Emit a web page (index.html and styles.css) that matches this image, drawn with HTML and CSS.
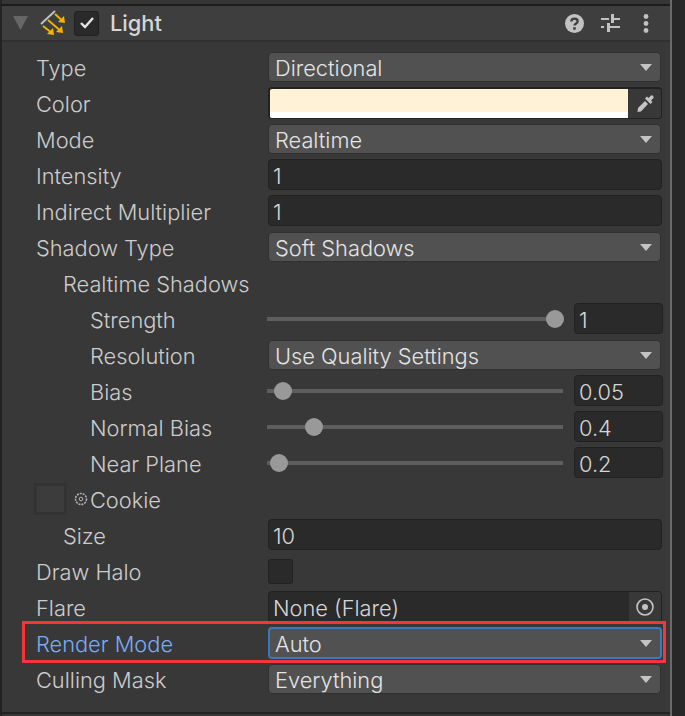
FILE: index.html
```html
<!DOCTYPE html>
<html lang="en">
<head>
  <meta charset="UTF-8">
  <meta name="viewport" content="width=device-width, initial-scale=1.0">
  <title>Light</title>
  <link rel="stylesheet" href="styles.css">
</head>
<body>
  <div class="window">
    <div class="panel">
      <div class="header">
        <svg class="foldout" width="15" height="14" viewBox="0 0 15 14"><path d="M0 0H15L7.500 14Z" fill="#666"/></svg>
        <svg class="light-icon" width="26" height="26" viewBox="0 0 26 26">
          <path d="M1 14 15 1" stroke="#c4c4c4" stroke-width="1.800" fill="none"/>
          <g stroke="#f5b400" stroke-width="1.800" fill="none">
            <path d="M15 4 21 9.500"/>
            <path d="M8 10 19 19.500"/>
            <path d="M3 16 10 21.500"/>
          </g>
          <g fill="#f5b400">
            <path d="M25 13 24 6 18 12Z"/>
            <path d="M23 23 22 16 16 22Z"/>
            <path d="M14 25 13 18 7 24Z"/>
          </g>
        </svg>
        <span class="checkbox header-check">
          <svg width="16" height="14" viewBox="0 0 16 14"><path d="M2 7 6 11 14 2" stroke="#e6e6e6" stroke-width="2.400" fill="none"/></svg>
        </span>
        <span class="title">Light</span>
        <span class="header-icons">
          <svg class="help-icon" width="19" height="19" viewBox="0 0 18 18">
            <circle cx="9" cy="9" r="9" fill="#c2c2c2"/>
            <path d="M6 7C6 3.500 12 3.500 12 7C12 9 9 9 9 11" stroke="#3e3e3e" stroke-width="2.200" fill="none"/>
            <rect x="7.800" y="12.500" width="2.400" height="2.400" fill="#3e3e3e"/>
          </svg>
          <svg class="presets-icon" width="19" height="18" viewBox="0 0 19 18" fill="#c2c2c2">
            <rect x="0" y="4" width="8" height="2"/>
            <rect x="10" y="0" width="3" height="9"/>
            <rect x="13" y="4" width="6" height="2"/>
            <rect x="0" y="12" width="3" height="2"/>
            <rect x="6" y="9" width="3" height="9"/>
            <rect x="9" y="12" width="10" height="2"/>
          </svg>
          <svg width="6" height="19" viewBox="0 0 6 19" fill="#c2c2c2">
            <circle cx="3" cy="2.500" r="2.400"/>
            <circle cx="3" cy="9.500" r="2.400"/>
            <circle cx="3" cy="16.500" r="2.400"/>
          </svg>
        </span>
      </div>

      <div class="rows">
        <div class="row">
          <span class="label">Type</span>
          <div class="dropdown">Directional<i class="arrow"></i></div>
        </div>
        <div class="row">
          <span class="label">Color</span>
          <div class="color-field">
            <div class="swatch"></div>
            <div class="picker">
              <svg width="20" height="20" viewBox="0 0 20 20">
                <path d="M12 2.500 13.500 4 16 1.500C17 .5 19.500 3 18.500 4L16 6.500 17.500 8 15.500 10 10 4.500Z" fill="#c4c4c4"/>
                <path d="M10 7 13 10 6 17.500 2.500 18 3 14Z" fill="#c4c4c4"/>
              </svg>
            </div>
          </div>
        </div>
        <div class="row">
          <span class="label">Mode</span>
          <div class="dropdown">Realtime<i class="arrow"></i></div>
        </div>
        <div class="row">
          <span class="label">Intensity</span>
          <div class="input">1</div>
        </div>
        <div class="row">
          <span class="label">Indirect Multiplier</span>
          <div class="input">1</div>
        </div>
        <div class="row">
          <span class="label">Shadow Type</span>
          <div class="dropdown">Soft Shadows<i class="arrow"></i></div>
        </div>
        <div class="row">
          <span class="label indent-1">Realtime Shadows</span>
        </div>
        <div class="row">
          <span class="label indent-2">Strength</span>
          <div class="slider">
            <div class="track"><i class="thumb" style="left: 279px"></i></div>
            <div class="input slider-input">1</div>
          </div>
        </div>
        <div class="row">
          <span class="label indent-2">Resolution</span>
          <div class="dropdown">Use Quality Settings<i class="arrow"></i></div>
        </div>
        <div class="row">
          <span class="label indent-2">Bias</span>
          <div class="slider">
            <div class="track"><i class="thumb" style="left: 7px"></i></div>
            <div class="input slider-input">0.05</div>
          </div>
        </div>
        <div class="row">
          <span class="label indent-2">Normal Bias</span>
          <div class="slider">
            <div class="track"><i class="thumb" style="left: 38px"></i></div>
            <div class="input slider-input">0.4</div>
          </div>
        </div>
        <div class="row">
          <span class="label indent-2">Near Plane</span>
          <div class="slider">
            <div class="track"><i class="thumb" style="left: 3px"></i></div>
            <div class="input slider-input">0.2</div>
          </div>
        </div>
        <div class="row">
          <div class="cookie-label">
            <span class="cookie-slot"></span>
            <svg class="cookie-icon" width="14" height="14" viewBox="0 0 14 14">
              <circle cx="7" cy="7" r="5.500" fill="none" stroke="#b4b4b4" stroke-width="1.500" stroke-dasharray="2 1"/>
              <circle cx="7" cy="7" r="1.800" fill="none" stroke="#b4b4b4"/>
            </svg>
            <span class="cookie-text">Cookie</span>
          </div>
        </div>
        <div class="row">
          <span class="label indent-1">Size</span>
          <div class="input">10</div>
        </div>
        <div class="row">
          <span class="label">Draw Halo</span>
          <span class="checkbox"></span>
        </div>
        <div class="row">
          <span class="label">Flare</span>
          <div class="object-field">
            <span class="object-name">None (Flare)</span>
            <span class="object-pick">
              <svg width="18" height="18" viewBox="0 0 18 18">
                <circle cx="9" cy="9" r="8" fill="none" stroke="#c4c4c4" stroke-width="1.600"/>
                <circle cx="9" cy="9" r="3" fill="#c4c4c4"/>
              </svg>
            </span>
          </div>
        </div>
        <div class="row">
          <span class="label label-active">Render Mode</span>
          <div class="dropdown dropdown-focus">Auto<i class="arrow"></i></div>
          <div class="highlight"></div>
        </div>
        <div class="row">
          <span class="label">Culling Mask</span>
          <div class="dropdown">Everything<i class="arrow"></i></div>
        </div>
      </div>
    </div>
  </div>
</body>
</html>
```

FILE: styles.css
```css
* {
  box-sizing: border-box;
}
body {
  margin: 0;
  background: #282828;
  font-family: Inter, "Liberation Sans", sans-serif;
  font-size: 21.800px;
  font-weight: 300;
  color: #cccccc;
}
.window {
  width: 672px;
  height: 716px;
  padding-top: 4px;
  background: #353535;
  border-left: 2px solid #232323;
  border-right: 2px solid #6a6a6a;
}
.panel {
  height: 710px;
  background: #383838;
  border-top: 2px solid #1c1c1c;
  border-bottom: 2px solid #232323;
}
.header {
  display: flex;
  align-items: center;
  height: 36px;
  background: #3e3e3e;
  border-bottom: 2px solid #303030;
}
.foldout {
  margin-left: 11px;
}
.light-icon {
  margin-left: 12px;
}
.header-check {
  margin-left: 8px;
  width: 24px;
}
.title {
  margin-left: 11px;
  font-weight: 500;
  color: #d6d6d6;
}
.header-icons {
  display: flex;
  align-items: center;
  margin-left: auto;
  margin-right: 21px;
}
.help-icon {
  margin-right: 17px;
}
.presets-icon {
  margin-right: 23px;
}
.rows {
  padding-top: 7px;
}
.row {
  position: relative;
  display: flex;
  align-items: center;
  height: 36px;
  padding-left: 34px;
}
.label {
  flex: 0 0 232px;
  padding-top: 1px;
  white-space: nowrap;
}
.indent-1 {
  padding-left: 27px;
}
.indent-2 {
  padding-left: 54px;
}
.label-active {
  color: #7babf3;
}
.dropdown {
  position: relative;
  display: flex;
  align-items: center;
  width: 393px;
  height: 30px;
  padding: 1px 0 0 6px;
  background: #515151;
  border: 1px solid #303030;
  border-radius: 4px;
  color: #e4e4e4;
}
.dropdown-focus {
  width: 394px;
  height: 32px;
  border: 2px solid #3a79bb;
  padding-left: 5px;
}
.arrow {
  position: absolute;
  right: 8px;
  top: 11px;
  width: 0;
  height: 0;
  border-left: 6.500px solid transparent;
  border-right: 6.500px solid transparent;
  border-top: 7px solid #c4c4c4;
}
.input {
  display: flex;
  align-items: center;
  align-self: flex-start;
  width: 394px;
  height: 31px;
  margin-top: 2px;
  padding: 3px 0 0 4px;
  background: #2a2a2a;
  border: 1px solid #212121;
  border-radius: 4px;
  color: #d6d6d6;
}
.color-field {
  display: flex;
  width: 394px;
  height: 32px;
  background: #2a2a2a;
  border: 1px solid #212121;
  border-width: 2px 1px 1px 2px;
  border-radius: 4px;
  overflow: hidden;
}
.swatch {
  flex: 1;
  background: #fff2d6;
  border-bottom: 6px solid #fff;
}
.picker {
  display: flex;
  align-items: center;
  justify-content: center;
  width: 33px;
  background: #383838;
}
.slider {
  display: flex;
  align-items: center;
  align-self: stretch;
  gap: 11px;
}
.track {
  position: relative;
  width: 296px;
  height: 4px;
  margin-left: -1px;
  background: #5e5e5e;
}
.thumb {
  position: absolute;
  top: -7px;
  width: 18px;
  height: 18px;
  border-radius: 50%;
  background: #999;
}
.slider-input {
  width: 89px;
}
.cookie-label {
  display: flex;
  align-items: center;
}
.cookie-slot {
  width: 33px;
  height: 32px;
  margin-left: -2px;
  background: #3c3c3c;
  border: 3px solid #333;
}
.cookie-icon {
  margin-left: 7px;
}
.cookie-text {
  margin-left: 2px;
  padding-top: 1px;
}
.checkbox {
  display: flex;
  align-items: center;
  justify-content: center;
  width: 25px;
  height: 25px;
  background: #2a2a2a;
  border: 1px solid #212121;
  border-radius: 3px;
}
.object-field {
  display: flex;
  width: 394px;
  height: 32px;
  background: #2a2a2a;
  border: 1px solid #212121;
  border-radius: 4px;
  overflow: hidden;
  color: #d6d6d6;
}
.object-name {
  flex: 1;
  padding: 3px 0 0 4px;
}
.object-pick {
  display: flex;
  align-items: center;
  justify-content: center;
  width: 32px;
  background: #383838;
}
.highlight {
  position: absolute;
  left: 20px;
  top: -4px;
  width: 644px;
  height: 42px;
  border: 3px solid #f6343a;
}
```
